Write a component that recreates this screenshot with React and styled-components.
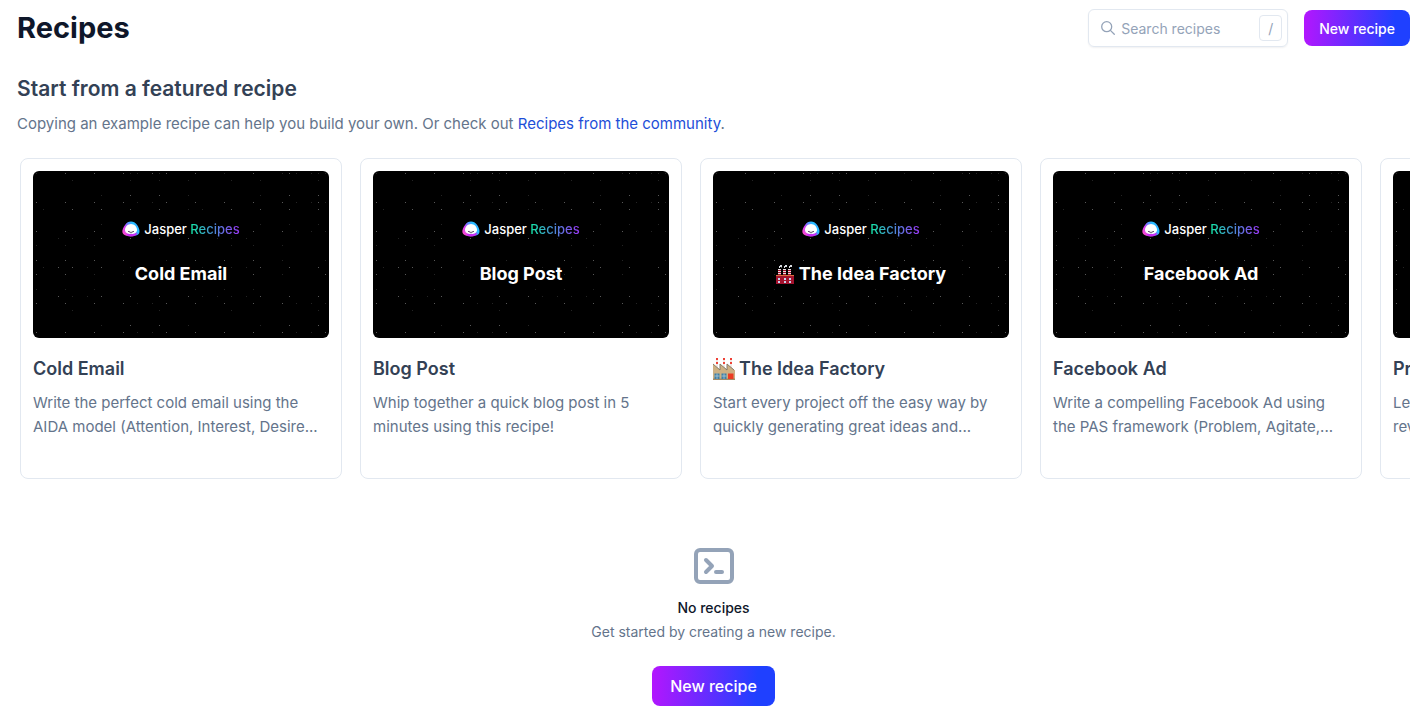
import React, { useId } from "react";
import styled, { createGlobalStyle } from "styled-components";

const GlobalStyle = createGlobalStyle`
  * {
    box-sizing: border-box;
  }
  body {
    margin: 0;
    background: #ffffff;
    color: #0f172a;
    font-family: Inter, "Liberation Sans", sans-serif;
  }
  h1, h2, h3, p {
    margin: 0;
  }
`;

const StyledPage = styled.main`
  padding: 8px 7px 14px 17px;
`;

const StyledHeader = styled.header`
  display: flex;
  align-items: center;
  justify-content: space-between;
  height: 40px;
`;

const StyledTitle = styled.h1`
  font-size: 29px;
  line-height: 36px;
  font-weight: 700;
`;

const StyledActions = styled.div`
  display: flex;
  align-items: center;
  gap: 16px;
`;

const StyledSearch = styled.label`
  display: flex;
  align-items: center;
  gap: 5px;
  width: 200px;
  height: 38px;
  padding: 0 5px 0 11px;
  border: 1px solid #e2e8f0;
  border-radius: 6px;
  box-shadow: 0 1px 2px rgba(15, 23, 42, 0.06);
  color: #94a3b8;
  svg {
    flex: none;
  }
  input {
    flex: 1;
    min-width: 0;
    height: 20px;
    padding: 0;
    border: 0;
    outline: 0;
    background: none;
    font-family: inherit;
    font-size: 14px;
    color: #334155;
  }
  input::placeholder {
    color: #94a3b8;
    opacity: 1;
  }
`;

const StyledKey = styled.kbd`
  display: grid;
  place-items: center;
  width: 23px;
  height: 26px;
  border: 1px solid #e2e8f0;
  border-radius: 4px;
  font-family: inherit;
  font-size: 14px;
`;

const StyledButton = styled.button`
  height: ${({ $large }) => ($large ? 40 : 36)}px;
  padding: 0 ${({ $large }) => ($large ? 18 : 15)}px;
  border: 0;
  border-radius: 8px;
  background: linear-gradient(93deg, #b416fe 0%, #1f40ff 85%);
  color: #ffffff;
  font-family: inherit;
  font-size: ${({ $large }) => ($large ? 16 : 14)}px;
  font-weight: 500;
  white-space: nowrap;
  cursor: pointer;
`;

const StyledFeatured = styled.section`
  margin-top: 25px;
`;

const StyledHeading = styled.h2`
  color: #334155;
  font-size: 21px;
  line-height: 32px;
  font-weight: 600;
`;

const StyledIntro = styled.p`
  margin-top: 7px;
  color: #64748b;
  font-size: 15px;
  line-height: 24px;
  a {
    color: #1d4ed8;
    text-decoration: none;
  }
`;

const StyledCards = styled.div`
  display: flex;
  gap: 18px;
  margin-top: 22px;
  padding-left: 3px;
  overflow: hidden;
`;

const StyledCard = styled.article`
  flex: 0 0 322px;
  padding: 12px 12px 39px;
  border: 1px solid #e2e8f0;
  border-radius: 8px;
`;

const StyledCover = styled.div`
  display: flex;
  flex-direction: column;
  align-items: center;
  gap: 25px;
  position: relative;
  height: 167px;
  padding-top: 50px;
  border-radius: 6px;
  overflow: hidden;
  background: #000000;
`;

const StyledStars = styled.svg`
  position: absolute;
  top: 0;
  left: 0;
`;

const StyledBrand = styled.div`
  display: flex;
  align-items: center;
  gap: 4px;
  position: relative;
  color: #ffffff;
  font-size: 13px;
  line-height: 16px;
  font-weight: 500;
`;

const StyledBrandAccent = styled.span`
  background: linear-gradient(90deg, #12e8a4 0%, #4f87dc 50%, #9a35f5 100%);
  background-clip: text;
  -webkit-background-clip: text;
  color: transparent;
`;

const StyledCoverTitle = styled.div`
  display: flex;
  align-items: center;
  gap: 5px;
  position: relative;
  color: #ffffff;
  font-size: 18px;
  line-height: 24px;
  font-weight: 700;
`;

const StyledCardTitle = styled.h3`
  display: flex;
  align-items: center;
  gap: 4px;
  margin-top: 17px;
  color: #334155;
  font-size: 18px;
  line-height: 28px;
  font-weight: 600;
  white-space: nowrap;
`;

const StyledCardText = styled.p`
  margin-top: 8px;
  height: 48px;
  color: #64748b;
  font-size: 15px;
  line-height: 24px;
`;

const StyledEmpty = styled.section`
  display: flex;
  flex-direction: column;
  align-items: center;
  margin-top: 69px;
  text-align: center;
`;

const StyledEmptyTitle = styled.h3`
  margin-top: 14px;
  font-size: 14px;
  line-height: 20px;
  font-weight: 500;
`;

const StyledEmptyText = styled.p`
  margin: 4px 0 24px;
  color: #64748b;
  font-size: 14px;
  line-height: 20px;
`;

// [y, bright xs, dim xs]
const starRows = [
  [2, [32, 61, 90, 119, 133, 162, 220, 256], [3, 97, 104, 126, 191, 249, 263, 278, 285, 292]],
  [9, [], [39, 97, 126, 155, 198, 227, 285]],
  [24, [97, 126, 256, 285], [68, 155, 227]],
  [31, [3, 32, 61, 90, 133, 162, 191, 220, 249, 285], [104, 119, 263, 278, 292]],
  [38, [39, 68, 97, 126, 198, 227, 256, 285], [10, 155, 169]],
  [53, [], [68, 227, 256, 285]],
  [60, [3, 32, 61, 220, 249], [263, 278, 292]],
  [67, [68, 97, 126, 155], [25, 39, 54, 184, 198, 213]],
  [74, [], [3, 32, 61, 198, 220, 249]],
  [89, [3, 32, 61, 90, 162, 191, 220], [133, 249, 292]],
  [96, [25, 39, 68, 227, 256, 285], [10, 54, 97, 155, 169, 184, 198, 213]],
  [103, [3, 32, 220, 292], [61, 90, 191, 249]],
  [118, [], [3, 32, 61, 162, 191, 220]],
  [125, [25, 68, 97, 126, 155, 227, 256, 285], [39, 54, 169, 184, 198, 213]],
  [132, [3, 32, 61, 90, 133, 162, 191, 220, 249], [104, 119, 263, 278, 292]],
  [139, [], [39, 126, 198, 285]],
  [154, [97, 126, 256, 285], [68, 155, 227]],
  [161, [3, 32, 61, 90, 133, 162, 191, 220, 249, 292], [104, 119, 263, 278]],
];

const recipes = [
  {
    title: "Cold Email",
    text: "Write the perfect cold email using the AIDA model (Attention, Interest, Desire...",
  },
  {
    title: "Blog Post",
    text: "Whip together a quick blog post in 5 minutes using this recipe!",
  },
  {
    title: "The Idea Factory",
    factory: true,
    text: "Start every project off the easy way by quickly generating great ideas and...",
  },
  {
    title: "Facebook Ad",
    text: "Write a compelling Facebook Ad using the PAS framework (Problem, Agitate,...",
  },
  {
    title: "Product Review",
    text: "Learn how to write a helpful product review for your audience.",
  },
];

function SearchIcon() {
  return (
    <svg width="16" height="16" viewBox="0 0 16 16" fill="none" stroke="currentColor" strokeWidth="1.3" strokeLinecap="round">
      <circle cx="6.7" cy="6.7" r="5" />
      <path d="M10.4 10.4 14.3 14.3" />
    </svg>
  );
}

function TerminalIcon() {
  return (
    <svg width="40" height="36" viewBox="0 0 40 36" fill="none" stroke="#94a3b8" strokeWidth="4" strokeLinecap="round" strokeLinejoin="round">
      <rect x="2" y="2" width="36" height="32" rx="4" />
      <path d="M12 12l6 6-6 6M22 24h6" />
    </svg>
  );
}

function JasperIcon() {
  const id = useId();
  return (
    <svg width="18" height="16" viewBox="0 0 18 16">
      <defs>
        <linearGradient id={id} x1="0" y1="0.8" x2="1" y2="0.2">
          <stop offset="0" stopColor="#ff4fc8" />
          <stop offset="0.3" stopColor="#d63cf5" />
          <stop offset="0.5" stopColor="#6e7bff" />
          <stop offset="0.75" stopColor="#22c3ff" />
          <stop offset="1" stopColor="#4b8cff" />
        </linearGradient>
      </defs>
      <path
        d="M9 .5C11.5 .5 13.3 1.5 14.8 3.6 16.5 6 17.8 8.6 17.5 11 17.2 13.2 15.5 14.2 13.5 14.6 10.5 15.7 7 15.7 4.5 14.8 2.5 14.3 .8 13.4 .4 11.3 0 8.9 1.5 6 3.2 3.7 4.7 1.5 6.5 .5 9 .5Z"
        fill={`url(#${id})`}
      />
      <path d="M4.5 14.6C7 15.6 10.5 15.6 13.5 14.4L15.5 12 12 12.5H6Z" fill="#c92cf5" />
      <path d="M9 3c3.3 0 6 2.8 6 5.800S12.3 13 9 13s-6-1.200-6-4.200S5.700 3 9 3Z" fill="#ffffff" />
      <path d="M6.200 10.300q1 1.200 2 .2M9.800 10.500q1 1 2-.2M8.200 11.700h1.600" fill="none" stroke="#1b1433" strokeWidth="0.900" />
    </svg>
  );
}

function RedFactoryIcon() {
  return (
    <svg width="18" height="19" viewBox="0 0 18 19" role="img" aria-label="factory">
      {[2, 7, 12].map((x) => (
        <g key={x}>
          <path d={`M${x} 4h3v6h-3z`} fill="#e9dfe3" />
          <path d={`M${x} 5h3v1h-3zM${x} 7h3v1h-3zM${x} 9h3v1h-3z`} fill="#a3122d" />
          <path d={`M${x + 1} 3v-2h1v-1h2v2h-2v1z`} fill="#d7dbe0" />
        </g>
      ))}
      <path d="M0 10h18v9H0z" fill="#a3122d" />
      <path d="M0 10h18v1H0z" fill="#d8703f" />
      <path d="M2 13h2v2H2zM8 13h2v2H8zM13 13h2v2h-2zM2 16h2v2H2zM8 16h2v2H8zM13 16h2v2h-2z" fill="#c8d3ee" />
    </svg>
  );
}

function TanFactoryIcon() {
  return (
    <svg width="22" height="22" viewBox="0 0 22 22" role="img" aria-label="factory">
      {[3, 10, 17].map((x) => (
        <g key={x}>
          <path d={`M${x} 0h2v11h-2z`} fill="#f1e9e4" />
          <path d={`M${x} 0h2v2h-2zM${x} 4h2v2h-2z`} fill="#ee4136" />
        </g>
      ))}
      <path d="M0 6l7 6V6l7 6V6l7 6h1v10H0z" fill="#cdb083" />
      <path d="M0 6l7 6V6l7 6V6l7 6" fill="none" stroke="#857b68" strokeWidth="1" />
      <path d="M0 20.5h22V22H0z" fill="#a38a65" />
      <path d="M1.5 15.5h5V21h-5zM8.5 15.5h5V21h-5z" fill="#3f7ea6" />
      <path d="M4 15.5V21M11 15.5V21M1.5 18h5M8.5 18h5" stroke="#b9d2dc" strokeWidth="0.7" />
      <path d="M15 15.5h5.5V21H15z" fill="#ec3b22" />
    </svg>
  );
}

function Stars() {
  const toPath = (col) =>
    starRows.map((row) => row[col].map((x) => `M${x} ${row[0]}h1v1h-1z`).join("")).join("");
  return (
    <StyledStars width="296" height="167" aria-hidden="true">
      <path d={toPath(1)} fill="#585858" />
      <path d={toPath(2)} fill="#242424" />
    </StyledStars>
  );
}

function RecipeCard({ title, text, factory }) {
  return (
    <StyledCard>
      <StyledCover>
        <Stars />
        <StyledBrand>
          <JasperIcon />
          <span>
            Jasper <StyledBrandAccent>Recipes</StyledBrandAccent>
          </span>
        </StyledBrand>
        <StyledCoverTitle>
          {factory && <RedFactoryIcon />}
          {title}
        </StyledCoverTitle>
      </StyledCover>
      <StyledCardTitle>
        {factory && <TanFactoryIcon />}
        {title}
      </StyledCardTitle>
      <StyledCardText>{text}</StyledCardText>
    </StyledCard>
  );
}

export default function App() {
  return (
    <>
      <GlobalStyle />
      <StyledPage>
        <StyledHeader>
          <StyledTitle>Recipes</StyledTitle>
          <StyledActions>
            <StyledSearch>
              <SearchIcon />
              <input type="text" placeholder="Search recipes" aria-label="Search recipes" />
              <StyledKey>/</StyledKey>
            </StyledSearch>
            <StyledButton type="button">New recipe</StyledButton>
          </StyledActions>
        </StyledHeader>
        <StyledFeatured>
          <StyledHeading>Start from a featured recipe</StyledHeading>
          <StyledIntro>
            Copying an example recipe can help you build your own. Or check out{" "}
            <a href="#community">Recipes from the community</a>.
          </StyledIntro>
          <StyledCards>
            {recipes.map((recipe) => (
              <RecipeCard key={recipe.title} {...recipe} />
            ))}
          </StyledCards>
        </StyledFeatured>
        <StyledEmpty>
          <TerminalIcon />
          <StyledEmptyTitle>No recipes</StyledEmptyTitle>
          <StyledEmptyText>Get started by creating a new recipe.</StyledEmptyText>
          <StyledButton type="button" $large>
            New recipe
          </StyledButton>
        </StyledEmpty>
      </StyledPage>
    </>
  );
}
